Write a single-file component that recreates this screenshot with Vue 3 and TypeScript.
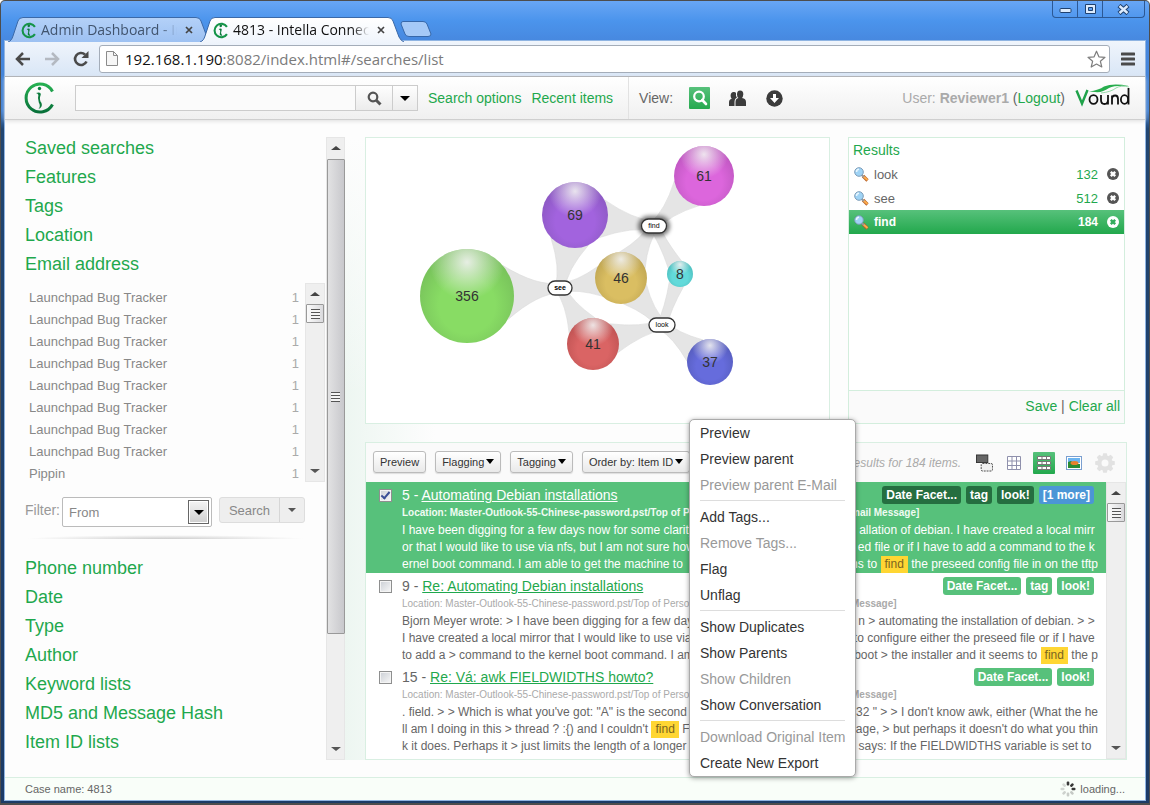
<script setup lang="ts">
import { onMounted, ref } from 'vue'

interface Cluster { id: string; x: number; y: number; r: number; edge: string; core: string; terms: string[] }
interface Term { id: string; x: number; y: number; w: number; active?: boolean }
interface Segment { text: string; hit?: boolean }
interface Tag { label: string; kind?: string }
interface Item {
  id: number
  title: string
  selected: boolean
  tags: Tag[]
  place: [string, string]
  lines: [Segment[], Segment[]][]
}

const facetsTop = ['Saved searches', 'Features', 'Tags', 'Location', 'Email address']
const facetsBottom = ['Phone number', 'Date', 'Type', 'Author', 'Keyword lists', 'MD5 and Message Hash', 'Item ID lists']
const senders = [...Array(9).fill('Launchpad Bug Tracker'), 'Pippin'] as string[]

const results = [
  { term: 'look', count: 132, active: false },
  { term: 'see', count: 512, active: false },
  { term: 'find', count: 184, active: true },
]

const terms: Term[] = [
  { id: 'see', x: 194, y: 150, w: 24 },
  { id: 'find', x: 288, y: 88, w: 25, active: true },
  { id: 'look', x: 296, y: 187, w: 26 },
]

const clusters: Cluster[] = [
  { id: '356', x: 101, y: 158, r: 47, edge: '#76bf5a', core: '#88dc64', terms: ['see'] },
  { id: '69', x: 209, y: 77, r: 33, edge: '#8a58c0', core: '#a263de', terms: ['see', 'find'] },
  { id: '61', x: 338, y: 38, r: 30, edge: '#bd56bf', core: '#dc66dc', terms: ['find'] },
  { id: '46', x: 255, y: 140, r: 26, edge: '#bda350', core: '#dabe62', terms: ['see', 'find', 'look'] },
  { id: '8', x: 314, y: 136, r: 13, edge: '#4dbdbd', core: '#62dada', terms: ['find', 'look'] },
  { id: '41', x: 227, y: 206, r: 26, edge: '#be5252', core: '#da6464', terms: ['see', 'look'] },
  { id: '37', x: 344, y: 224, r: 23, edge: '#555cbc', core: '#666cdc', terms: ['look'] },
]

function connector(c: Cluster, t: Term): string {
  const dx = t.x - c.x
  const dy = t.y - c.y
  const dist = Math.hypot(dx, dy)
  const ux = dx / dist
  const uy = dy / dist
  const at = (along: number, side: number) =>
    `${(c.x + ux * along - uy * side).toFixed(1)} ${(c.y + uy * along + ux * side).toFixed(1)}`
  const spread = 0.62
  const base = c.r * Math.cos(spread)
  const wide = c.r * Math.sin(spread)
  const neck = base + (dist - base) * 0.6
  return `M${at(base, wide)} Q${at(neck, 3)} ${at(dist, 5)} L${at(dist, -5)} Q${at(neck, -3)} ${at(base, -wide)} Z`
}

const links = clusters.flatMap(c => c.terms.map(id => connector(c, terms.find(t => t.id === id)!)))

const items: Item[] = [
  {
    id: 5, title: 'Automating Debian installations', selected: true,
    tags: [{ label: 'Date Facet...' }, { label: 'tag' }, { label: 'look!' }, { label: '[1 more]', kind: 'more' }],
    place: ['Location: Master-Outlook-55-Chinese-password.pst/Top of Personal', 'mail Message]'],
    lines: [
      [[{ text: 'I have been digging for a few days now for some clarity' }], [{ text: 'allation of debian. I have created a local mirr ' }]],
      [[{ text: 'or that I would like to use via nfs, but I am not sure how' }], [{ text: 'ed file or if I have to add a command to the k ' }]],
      [[{ text: 'ernel boot command. I am able to get the machine to' }], [{ text: 'ms to ' }, { text: 'find', hit: true }, { text: ' the preseed config file in on the tftp' }]],
    ],
  },
  {
    id: 9, title: 'Re: Automating Debian installations', selected: false,
    tags: [{ label: 'Date Facet...' }, { label: 'tag' }, { label: 'look!' }],
    place: ['Location: Master-Outlook-55-Chinese-password.pst/Top of Personal', 'Message]'],
    lines: [
      [[{ text: 'Bjorn Meyer wrote: > I have been digging for a few days' }], [{ text: 'n > automating the installation of debian. > > ' }]],
      [[{ text: 'I have created a local mirror that I would like to use via' }], [{ text: 'to configure either the preseed file or if I have ' }]],
      [[{ text: 'to add a > command to the kernel boot command. I am' }], [{ text: 'boot > the installer and it seems to ' }, { text: 'find', hit: true }, { text: ' the p' }]],
    ],
  },
  {
    id: 15, title: 'Re: Vá: awk FIELDWIDTHS howto?', selected: false,
    tags: [{ label: 'Date Facet...' }, { label: 'look!' }],
    place: ['Location: Master-Outlook-55-Chinese-password.pst/Top of Personal', 'Message]'],
    lines: [
      [[{ text: '. field. > > Which is what you\'ve got: "A" is the second' }], [{ text: ' 32 " > > I don\'t know awk, either (What the he' }]],
      [[{ text: 'll am I doing in this > thread ? :{) and I couldn\'t ' }, { text: 'find', hit: true }, { text: ' FIELD' }], [{ text: 'age, > but perhaps it doesn\'t do what you thin' }]],
      [[{ text: 'k it does. Perhaps it > just limits the length of a longer' }], [{ text: 'says: If the FIELDWIDTHS variable is set to  ' }]],
    ],
  },
]

const menu: { label: string; off?: boolean }[][] = [
  [{ label: 'Preview' }, { label: 'Preview parent' }, { label: 'Preview parent E-Mail', off: true }],
  [{ label: 'Add Tags...' }, { label: 'Remove Tags...', off: true }, { label: 'Flag' }, { label: 'Unflag' }],
  [{ label: 'Show Duplicates' }, { label: 'Show Parents' }, { label: 'Show Children', off: true }, { label: 'Show Conversation' }],
  [{ label: 'Download Original Item', off: true }, { label: 'Create New Export' }],
]

const tabs = [
  { title: 'Admin Dashboard - Intella', active: false },
  { title: '4813 - Intella Connect', active: true },
]

const query = ref('')
const sender = ref('From')
const senderList = ref<HTMLElement | null>(null)
onMounted(() => {
  if (senderList.value) senderList.value.scrollTop = 18
})
</script>

<template>
  <div class="window">
    <header class="titlebar">
      <div class="tabs">
        <div v-for="(tab, i) in tabs" :key="tab.title" class="tab" :class="{ active: tab.active }">
          <svg class="tab-shape" viewBox="0 0 204 25" aria-hidden="true">
            <defs>
              <linearGradient :id="'tabfill' + i" x1="0" y1="0" x2="0" y2="1">
                <stop offset="0" :stop-color="tab.active ? '#ffffff' : '#b4d1f8'" />
                <stop offset="1" :stop-color="tab.active ? '#f0f5fc' : '#9dc1f2'" />
              </linearGradient>
            </defs>
            <path d="M0 25 C3 24 4 22 5 19 L10 4 Q11 .5 15 .5 H188 Q192 .5 193 4 L199 20 Q201 24 204 25" :fill="`url(#tabfill${i})`" stroke="#3b69a8" />
          </svg>
          <svg class="favicon" viewBox="0 0 31 32" aria-hidden="true">
            <path d="M27 9A13 13 0 1 0 27 23" fill="none" stroke="#149448" stroke-width="4" />
            <circle cx="15" cy="7" r="2.5" fill="#0c7a3c" />
            <path d="M11 13 Q17 11 17 14 Q14 20 18 26 Q11 27 14 19 Q15 15 11 13" fill="#0c7a3c" />
          </svg>
          <span class="tab-title">{{ tab.title }}</span>
          <button class="tab-close" aria-label="Close tab">
            <svg viewBox="0 0 8 8"><path d="M1 1L7 7M7 1L1 7" stroke="#444" stroke-width="1.7" /></svg>
          </button>
        </div>
        <button class="new-tab" aria-label="New tab">
          <svg viewBox="0 0 32 16"><path d="M3 .5H23Q26 .5 27 3L31 13Q31 15.500 28 15.500H9Q6 15.500 5 13L1 3Q1 .5 3 .5Z" fill="#a5c9f7" stroke="#3768aa" /></svg>
        </button>
      </div>
      <div class="win-buttons">
        <button aria-label="Minimize"><svg viewBox="0 0 13 9"><rect x="1" y="3.500" width="11" height="4" rx="1" fill="#dcebfd" stroke="#1f416f" /></svg></button>
        <button aria-label="Maximize"><svg viewBox="0 0 13 11"><path d="M1.500 .5h10v9h-10zM4.500 3.500h4v3h-4z" fill="#dcebfd" fill-rule="evenodd" stroke="#1f416f" /></svg></button>
        <button class="wide" aria-label="Close"><svg viewBox="0 0 13 11"><path d="M2 1.500L11 9.500M11 1.500L2 9.500" stroke="#1f416f" stroke-width="4.500" /><path d="M2.500 2L10.500 9M10.500 2L2.500 9" stroke="#dcebfd" stroke-width="2.400" /></svg></button>
      </div>
    </header>

    <div class="page">
      <nav class="toolbar">
        <button aria-label="Back"><svg viewBox="0 0 16 16"><path d="M15 8H3M8 2L2 8L8 14" fill="none" stroke="#4a4a4a" stroke-width="2.500" /></svg></button>
        <button aria-label="Forward"><svg viewBox="0 0 16 16"><path d="M1 8H13M8 2L14 8L8 14" fill="none" stroke="#b4b9c1" stroke-width="2.500" /></svg></button>
        <button aria-label="Reload"><svg viewBox="0 0 16 16"><path d="M13.500 10.500A6 6 0 1 1 12 3.500" fill="none" stroke="#4a4a4a" stroke-width="2.600" /><path d="M15.500 0V7H8.500Z" fill="#4a4a4a" /></svg></button>
        <div class="address">
          <svg class="page-icon" viewBox="0 0 12 15"><path d="M.5 .5H7.500L11.500 4.500V14.500H.5Z" fill="#f6f6f6" stroke="#8b8b8b" /><path d="M7.500 .5V4.500H11.500" fill="none" stroke="#8b8b8b" /></svg>
          <div class="url" role="textbox" aria-label="Address"><b>192.168.1.190</b>:8082/index.html#/searches/list</div>
          <button class="star" aria-label="Bookmark"><svg viewBox="0 0 19 18"><path d="M9.500 1.200L11.900 6.800L18 7.300L13.400 11.300L14.800 17L9.500 14L4.200 17L5.600 11.300L1 7.300L7.100 6.800Z" fill="#fff" stroke="#7d7d7d" stroke-width="1.200" stroke-linejoin="round" /></svg></button>
        </div>
        <button aria-label="Menu"><svg viewBox="0 0 14 14"><path d="M1 2H13M1 7H13M1 12H13" stroke="#4a4a4a" stroke-width="3" stroke-linecap="round" /></svg></button>
      </nav>

      <div class="app-bar">
        <svg class="logo" viewBox="0 0 31 32" aria-label="Intella Connect">
          <defs><linearGradient id="ring" x1="0" y1="0" x2="0" y2="1"><stop offset="0" stop-color="#27b052" /><stop offset="1" stop-color="#08713a" /></linearGradient></defs>
          <path d="M28.500 9.500A14 14 0 1 0 28.500 22.500" fill="none" stroke="url(#ring)" stroke-width="3" />
          <circle cx="15.500" cy="6.500" r="1.700" fill="#0c8040" />
          <path d="M12 11Q17 9.500 16.800 12.500Q14.600 18 17.500 21Q19 25 14.500 27Q17 24 14.800 20.500Q13.300 16 14.400 13Q14 11.500 12 11Z" fill="#0c7a3c" />
        </svg>
        <form class="search" @submit.prevent>
          <input v-model="query" type="text" aria-label="Search query" />
          <button class="go" aria-label="Search"><svg viewBox="0 0 15 15"><circle cx="6" cy="6" r="4.300" fill="none" stroke="#555" stroke-width="2.200" /><path d="M9 9L13.500 13.500" stroke="#555" stroke-width="3" /></svg></button>
          <button class="more" aria-label="More search choices"><i class="caret"></i></button>
        </form>
        <a href="#options" class="link options">Search options</a>
        <a href="#recent" class="link">Recent items</a>
        <div class="views">
          <span>View:</span>
          <button class="view on" aria-label="Search view"><svg viewBox="0 0 16 16"><circle cx="7" cy="6.500" r="4.800" fill="none" stroke="#fff" stroke-width="2.200" /><path d="M10.200 10L14 14" stroke="#fff" stroke-width="2.600" stroke-linecap="round" /></svg></button>
          <button class="view people" aria-label="People"><svg viewBox="0 0 17 17"><path d="M11 .5Q14.500 .5 14.300 4.500Q14 7 13 8Q17 8.500 17 12V16H6.500V12Q6.500 8.500 9.500 8Q8 7 8 4.500Q8 .5 11 .5Z" fill="#3c3c3c" /><path d="M4.500 2Q6.500 1.800 7 3Q6.500 6 8 7.500Q5.500 8.500 5.500 12V16H0V12.500Q0 9.500 2.700 8.800Q1.500 7.500 1.600 5.500Q1.800 2.200 4.500 2Z" fill="#3c3c3c" /></svg></button>
          <button class="view" aria-label="Downloads"><svg viewBox="0 0 17 17"><circle cx="8.500" cy="8.500" r="8.200" fill="#3c3c3c" /><path d="M7 4h3v4h3L8.500 13L4 8h3Z" fill="#fff" /></svg></button>
        </div>
        <div class="user">User: <b>Reviewer1</b> <span class="dark">(<a href="#logout">Logout</a>)</span></div>
        <svg class="vound" viewBox="0 0 55 24" role="img" aria-label="Vound">
          <path d="M1.500 6.500L7 19.500L12.500 6" fill="none" stroke="#1fa24a" stroke-width="2.400" />
          <path d="M14 7.500Q24 6 29 2.500Q38 -1 54 2Q40 1 34 4Q27 9 20 8Q17 7.500 14 7.500Z" fill="#28ad4e" />
          <path d="M26 9Q36 8 41 4Q46 1 54 3" fill="none" stroke="#7fcf95" stroke-width=".8" />
          <g fill="none" stroke="#111" stroke-width="1.800">
            <ellipse cx="18.500" cy="15.500" rx="4" ry="4.300" />
            <path d="M26 11V16Q26 20 29.500 20Q33 20 33 16V11V20.500M37 20.500V11.500M37 15Q37 11.500 40.200 11.500Q43 11.500 43 15V20.500" />
            <ellipse cx="49.500" cy="15.500" rx="3.600" ry="4.300" /><path d="M53.500 4V20.500" />
          </g>
        </svg>
      </div>

      <div class="content">
        <aside class="facets">
          <div class="facet-body">
            <h2 v-for="f in facetsTop" :key="f"><a :href="'#' + f">{{ f }}</a></h2>
            <div class="sender-box">
              <ul ref="senderList" class="senders">
                <li v-for="(s, i) in senders" :key="i"><span>{{ s }}</span><em>1</em></li>
              </ul>
              <div class="scrollbar inner">
                <i class="arrow up"></i><div class="thumb small"><i class="grip"></i></div><i class="arrow down"></i>
              </div>
            </div>
            <div class="filter">
              <label for="sender-filter">Filter:</label>
              <div class="select">
                <select id="sender-filter" v-model="sender"><option>From</option></select>
                <span class="drop"><i class="caret"></i></span>
              </div>
              <div class="split"><button>Search</button><button class="split-more" aria-label="More"><i class="caret"></i></button></div>
            </div>
            <div class="divider"></div>
            <h2 v-for="f in facetsBottom" :key="f"><a :href="'#' + f">{{ f }}</a></h2>
          </div>
          <div class="scrollbar outer">
            <i class="arrow up"></i><div class="thumb long"><i class="grip"></i></div><i class="arrow down"></i>
          </div>
        </aside>

        <main>
          <div class="top-row">
            <section class="graph">
              <svg viewBox="0 0 463 285" preserveAspectRatio="xMinYMin meet">
                <defs>
                  <radialGradient v-for="c in clusters" :id="'ball' + c.id" :key="c.id" cx=".5" cy=".6" r=".6">
                    <stop offset="0" :stop-color="c.core" /><stop offset=".5" :stop-color="c.core" /><stop offset="1" :stop-color="c.edge" />
                  </radialGradient>
                  <radialGradient id="shine" cx=".5" cy=".14" r=".4">
                    <stop offset="0" stop-color="#f2f2f2" stop-opacity=".9" /><stop offset=".45" stop-color="#eee" stop-opacity=".5" /><stop offset="1" stop-color="#eee" stop-opacity="0" />
                  </radialGradient>
                  <filter id="glow" x="-50%" y="-50%" width="200%" height="200%"><feGaussianBlur stdDeviation="2" /></filter>
                </defs>
                <path v-for="(d, i) in links" :key="i" :d="d" class="connector" />
                <g v-for="c in clusters" :key="c.id">
                  <circle :cx="c.x" :cy="c.y" :r="c.r" :fill="`url(#ball${c.id})`" />
                  <circle :cx="c.x" :cy="c.y" :r="c.r" fill="url(#shine)" />
                  <text :x="c.x" :y="c.y + 5" class="ball-label">{{ c.id }}</text>
                </g>
                <g v-for="t in terms" :key="t.id">
                  <rect v-if="t.active" :x="t.x - 16" :y="t.y - 10" width="32" height="20" rx="10" fill="#000" opacity=".55" filter="url(#glow)" />
                  <rect :x="t.x - t.w / 2" :y="t.y - 7" :width="t.w" height="14" rx="7" class="pill" />
                  <text :x="t.x" :y="t.y + 2" class="pill-label" :class="{ strong: t.id === 'see' }">{{ t.id }}</text>
                </g>
              </svg>
            </section>

            <section class="results">
              <h3>Results</h3>
              <ul>
                <li v-for="r in results" :key="r.term" :class="{ active: r.active }">
                  <svg class="glass" viewBox="0 0 15 15"><path d="M9 9L13.500 13.500" stroke="#b5622c" stroke-width="3.200" /><path d="M9.500 9.500L13.500 13" stroke="#ffad4b" stroke-width="1.800" /><path d="M7.500 8L10 10" stroke="#999" stroke-width="2" /><circle cx="5" cy="5" r="4.300" fill="#9fd3f5" stroke="#7d9cb8" /><path d="M2.500 5Q2.500 2.500 5 2.300" fill="none" stroke="#e8f6ff" stroke-width="1.500" /></svg>
                  <span class="term">{{ r.term }}</span>
                  <span class="count">{{ r.count }}</span>
                  <button :aria-label="'Remove ' + r.term"><svg viewBox="0 0 12 12"><circle cx="6" cy="6" r="6" fill="currentColor" /><path d="M3.800 3.800L8.200 8.200M8.200 3.800L3.800 8.200" :stroke="r.active ? '#32ad5c' : '#fff'" stroke-width="2.400" /></svg></button>
                </li>
              </ul>
              <footer><a href="#save">Save</a> | <a href="#clear">Clear all</a></footer>
            </section>
          </div>

          <section class="list">
            <div class="list-bar">
              <button class="btn">Preview</button>
              <button class="btn">Flagging <i class="caret"></i></button>
              <button class="btn">Tagging <i class="caret"></i></button>
              <button class="btn">Order by: Item ID <i class="caret"></i></button>
              <span class="summary">Results for 184 items.</span>
              <button class="mode stack" aria-label="Arrange"><svg viewBox="0 0 18 18"><rect x=".5" y=".5" width="12" height="8" fill="#666" stroke="#333" /><rect x="5.500" y="9.500" width="12" height="8" rx="1.500" fill="#f0f0f0" stroke="#444" stroke-dasharray="2 1" /></svg></button>
              <button class="mode table-mode" aria-label="Table"><svg viewBox="0 0 14 14"><path d="M.5 .5H13.500V13.500H.5ZM5 .5V13.500M9.500 .5V13.500M.5 5H13.500M.5 9.500H13.500" fill="#fff" stroke="#8f90ac" /></svg></button>
              <button class="mode on" aria-label="List"><svg viewBox="0 0 14 14"><path d="M.5 .5H13.500V3.500H.5ZM.5 5.500H13.500V8.500H.5ZM.5 10.500H13.500V13.500H.5ZM5 .5V3.500M9.500 .5V3.500M5 5.500V8.500M9.500 5.500V8.500M5 10.500V13.500M9.500 10.500V13.500" fill="#fff" stroke="#777" /></svg></button>
              <button class="mode thumbs" aria-label="Thumbnails"><svg viewBox="0 0 16 14"><rect x=".5" y=".5" width="15" height="13" fill="#fff" stroke="#7a9fd0" /><rect x="2" y="2" width="12" height="5" fill="#6bb4f0" /><path d="M2 6L5 5L9 8H14V12H2Z" fill="#298a35" /><ellipse cx="8.500" cy="7" rx="4" ry="2" fill="#e8802d" /></svg></button>
              <button class="mode gear" aria-label="Settings"><svg viewBox="-10 -10 20 20"><circle r="5.500" fill="none" stroke="#e2e2e2" stroke-width="4" /><path v-for="a in 8" :key="a" :transform="`rotate(${a * 45})`" d="M-2.600 -6.500L-1.800 -9.800H1.800L2.600 -6.500Z" fill="#e2e2e2" /></svg></button>
            </div>
            <div class="list-main">
              <div class="items">
                <article v-for="it in items" :key="it.id" class="item" :class="{ selected: it.selected }">
                  <input type="checkbox" :checked="it.selected" :aria-label="'Select item ' + it.id" />
                  <div class="item-body">
                    <div class="item-head">
                      <span>{{ it.id }} - <a :href="'#item-' + it.id">{{ it.title }}</a></span>
                      <div class="tags"><span v-for="t in it.tags" :key="t.label" class="tag" :class="t.kind">{{ t.label }}</span></div>
                    </div>
                    <div class="line place"><span>{{ it.place[0] }}</span><b>{{ it.place[1] }}</b></div>
                    <div v-for="(ln, i) in it.lines" :key="i" class="line">
                      <span v-for="(half, h) in ln" :key="h"><template v-for="(s, k) in half" :key="k"><mark v-if="s.hit">{{ s.text }}</mark><template v-else>{{ s.text }}</template></template></span>
                    </div>
                  </div>
                </article>
              </div>
              <div class="scrollbar">
                <i class="arrow up"></i><div class="thumb small"><i class="grip"></i></div><i class="arrow down"></i>
              </div>
            </div>
          </section>

          <div class="menu" role="menu">
            <div v-for="(group, g) in menu" :key="g" class="menu-group">
              <button v-for="m in group" :key="m.label" role="menuitem" :disabled="m.off">{{ m.label }}</button>
            </div>
          </div>
        </main>
      </div>

      <footer class="status">
        <span>Case name: 4813</span>
        <span class="loading">
          <svg viewBox="-8 -8 16 16"><rect v-for="n in 8" :key="n" x="-1.300" y="-7.500" width="2.600" height="4" rx="1" fill="#222" :opacity="n < 4 ? 0.9 : 0.16 + (8 - n) * 0.02" :transform="`rotate(${(n - 1) * 45})`" /></svg>
          loading...
        </span>
      </footer>
    </div>
  </div>
</template>

<style>
body { margin: 0; }
</style>

<style scoped>
.window {
  box-sizing: border-box;
  min-height: 100vh;
  display: flex;
  flex-direction: column;
  padding: 0 4px 3px;
  border: 1px solid #4d4d4d;
  border-bottom-width: 2px;
  border-radius: 5px 5px 0 0;
  background: linear-gradient(#68a6f5 0, #4b94ec 20px, #4788df 40px, #4181d4 110px, #214672 128px, #1c3b66 100%);
  font-family: "Liberation Sans", Arial, sans-serif;
  font-size: 14px;
  color: #666;
}
button { font-family: inherit; padding: 0; border: 0; background: none; display: flex; align-items: center; justify-content: center; }
svg { display: block; }
a { color: #1fa84d; text-decoration: none; }
ul { list-style: none; margin: 0; padding: 0; }
h2, h3 { margin: 0; font-weight: normal; }

.titlebar { display: flex; justify-content: space-between; align-items: flex-start; height: 40px; }
.tabs { display: flex; align-self: flex-end; padding-left: 3px; }
.tab { position: relative; display: flex; align-items: center; box-sizing: border-box; width: 204px; height: 24px; margin-right: -12px; padding: 2px 16px 0 13px; font-family: "Open Sans", "Noto Sans", sans-serif; font-size: 14px; color: #41546e; }
.tab.active { z-index: 1; color: #111; }
.tab-shape { position: absolute; left: 0; top: 0; width: 204px; height: 25px; }
.favicon { position: relative; width: 16px; height: 17px; flex: none; }
.tab-title { position: relative; flex: 1; min-width: 0; margin: 0 7px 0 4px; overflow: hidden; white-space: nowrap; line-height: 22px; -webkit-mask-image: linear-gradient(to right, #000 88%, transparent); mask-image: linear-gradient(to right, #000 88%, transparent); }
.tab-close { position: relative; width: 9px; height: 9px; margin-right: 3px; }
.tab-close svg { width: 8px; height: 8px; }
.new-tab { width: 32px; height: 16px; margin: 4px 0 0 8px; }
.new-tab svg { width: 32px; height: 16px; }
.win-buttons { display: flex; border: 1px solid #2c5894; border-top: 0; border-radius: 0 0 4px 4px; overflow: hidden; }
.win-buttons button { width: 25px; height: 16px; border-right: 1px solid #2c5894; }
.win-buttons .wide { width: 41px; border-right: 0; }
.win-buttons svg { width: 13px; height: 11px; }

.page { flex: 1; display: flex; flex-direction: column; background: #fdfdfd; box-shadow: 0 0 0 1px #8fb4e2; }
.toolbar { display: flex; align-items: center; gap: 13px; box-sizing: border-box; height: 36px; padding: 0 10px; background: linear-gradient(#f0f5fc, #d9e6f6); border-bottom: 1px solid #a5a8ac; border-radius: 3px 3px 0 0; }
.toolbar > button svg { width: 16px; height: 16px; }
.toolbar > button:last-child svg { width: 14px; height: 14px; }
.address { flex: 1; display: flex; align-items: center; height: 26px; margin: 0 -2px 0 -3px; padding: 0 3px 0 6px; border: 1px solid #a4adb9; border-radius: 3px; background: #fff; }
.page-icon { width: 12px; height: 15px; }
.url { flex: 1; margin-left: 7px; font-family: "Open Sans", "Noto Sans", sans-serif; font-size: 15px; line-height: 24px; color: #7b7b7b; white-space: nowrap; }
.url b { font-weight: normal; color: #111; }
.star svg { width: 19px; height: 18px; }

.app-bar { display: flex; align-items: center; box-sizing: border-box; height: 43px; padding: 0 14px 0 19px; background: linear-gradient(#fff, #f0f0f0); border-bottom: 1px solid #cfcfcf; box-shadow: 0 1px 4px #ddd; position: relative; white-space: nowrap; }
.logo { width: 31px; height: 32px; flex: none; }
.search { display: flex; margin: 0 10px 0 20px; }
.search input { box-sizing: border-box; width: 280px; height: 26px; border: 1px solid #ccc; border-right: 0; background: #fbfbfb; outline: 0; }
.search button { box-sizing: border-box; height: 26px; border: 1px solid #ccc; background: linear-gradient(#fefefe, #ececec); }
.go { width: 38px; }
.go svg { width: 15px; height: 15px; }
.search .more { width: 25px; border-left: 0; }
.caret { display: inline-block; border: 4px solid transparent; border-top: 4px solid #000; border-bottom: 0; }
.search .caret { border-width: 5px 5px 0; }
.options { margin-right: 10px; }
.views { display: flex; align-items: center; align-self: stretch; margin-left: 15px; padding-left: 10px; border-left: 1px solid #e2e2e2; }
.view { margin-left: 20px; }
.view svg { width: 17px; height: 17px; }
.view.on { width: 21px; height: 22px; margin-left: 16px; border-radius: 1px; background: linear-gradient(#57c17b, #26a94f); }
.view.on svg { width: 16px; height: 16px; }
.view.people { margin-left: 19px; }
.user { margin-left: auto; color: #aaa; }
.user .dark { color: #666; }
.vound { width: 55px; height: 24px; margin: 0 1px 4px 10px; }

.content { flex: 1; display: flex; padding: 17px 18px 17px 20px; }
.facets { display: flex; flex: none; width: 320px; }
.facet-body { width: 301px; padding-top: 1px; }
h2 { font-size: 18px; line-height: 21px; margin-bottom: 8px; }
h2:last-child { margin-bottom: 0; }
.sender-box { display: flex; height: 199px; margin-right: 1px; }
.senders { flex: 1; overflow: hidden; font-size: 13px; color: #888; }
.senders li { display: flex; justify-content: space-between; padding: 0 6px 0 4px; line-height: 22px; }
.senders em { font-style: normal; color: #aaa; }
.filter { display: flex; align-items: flex-start; margin-top: 15px; color: #999; }
.filter label { line-height: 26px; width: 37px; }
.select { position: relative; width: 150px; height: 30px; }
.select select { appearance: none; box-sizing: border-box; width: 100%; height: 100%; padding: 0 6px; border: 1px solid #bbb; border-radius: 2px; background: #fff; color: #888; font: inherit; font-size: 13px; }
.drop { position: absolute; right: 3px; top: 3px; box-sizing: border-box; width: 21px; height: 24px; display: flex; align-items: center; justify-content: center; border: 1px solid #666; background: linear-gradient(#f4f4f4, #cfcfcf); box-shadow: inset 0 0 0 1px #fff; pointer-events: none; }
.drop .caret { border-width: 5px 5px 0; }
.split { display: flex; box-sizing: border-box; width: 86px; height: 26px; margin-left: 7px; border: 1px solid #ddd; border-radius: 3px; background: #eee; }
.split button { flex: 1; font-size: 13px; color: #888; }
.split .split-more { flex: none; width: 25px; border-left: 1px solid #d6d6d6; }
.split .caret { border-top-color: #555; }
.divider { height: 4px; margin: 8px 20px 19px 0; background: radial-gradient(ellipse at 50% 100%, #ccc, transparent 70%); }

.scrollbar { display: flex; flex-direction: column; align-items: center; box-sizing: border-box; width: 20px; flex: none; border: 1px solid #e6e6e6; background: #efefef; padding-bottom: 8px; }
.outer { width: 19px; }
.arrow { border: 5px solid transparent; border-top-width: 0; border-bottom: 4px solid #444; margin: 8px 0; }
.arrow.down { border-top: 4px solid #555; border-bottom: 0; margin: auto 0 0; }
.thumb { display: flex; align-items: center; justify-content: center; box-sizing: border-box; width: 18px; border: 1px solid #999; border-radius: 1px; background: linear-gradient(to right, #fafafa, #dadadd); }
.thumb.small { height: 19px; }
.thumb.long { height: 475px; margin-top: 1px; background: linear-gradient(to right, #e2e2e3, #c8c8cc); }
.grip { width: 9px; height: 10px; background: repeating-linear-gradient(#555 0 1px, #f4f4f4 1px 3px); }

main { position: relative; flex: 1; min-width: 0; display: flex; flex-direction: column; padding-left: 20px; background: linear-gradient(#fdfdfd, transparent 260px), linear-gradient(to right, #edf6f1, #fdfdfd 90px); }
.top-row { display: flex; gap: 18px; margin-right: 2px; height: 287px; }
.graph { flex: 1; min-width: 0; border: 1px solid #d9efe2; background: #fff; }
.graph svg { width: 100%; height: 285px; }
.connector { fill: #e5e5e5; stroke: #dadada; stroke-width: .6; }
.ball-label { font-size: 14px; text-anchor: middle; fill: #333; }
.pill { fill: #fff; stroke: #333; stroke-width: 1.300; }
.pill-label { font-size: 7px; text-anchor: middle; fill: #000; }
.pill-label.strong { font-weight: bold; }
.results { display: flex; flex-direction: column; box-sizing: border-box; width: 277px; border: 1px solid #d3eedd; background: #fff; }
h3 { padding-left: 4px; font-size: 14px; line-height: 24px; color: #1fa84d; }
.results li { display: flex; align-items: center; height: 24px; padding: 0 5px; font-size: 13px; }
.glass { width: 15px; height: 15px; }
.term { flex: 1; margin-left: 5px; }
.count { color: #1fa84d; margin-right: 9px; }
.results li button { width: 12px; height: 12px; color: #555; }
.results li button svg { width: 12px; height: 12px; }
.results li.active, .results li.active .count, .results li.active button { color: #fff; }
.results li.active { background: linear-gradient(#57c17b, #22a84c); font-weight: bold; font-size: 12px; }
.results footer { margin-top: auto; height: 32px; line-height: 30px; padding-right: 4px; border-top: 1px solid #d3eedd; background: #fafafa; text-align: right; }

.list { flex: 1; display: flex; flex-direction: column; margin-top: 18px; border: 1px solid #d9efe2; background: #fff; }
.list-bar { display: flex; align-items: center; height: 39px; padding: 0 11px 0 7px; background: #fafafa; }
.btn { box-sizing: border-box; height: 22px; margin: 0 9px 2px 0; padding: 0 6px; border: 1px solid #bbb; border-radius: 3px; background: linear-gradient(#fff, #e9e9e9); box-shadow: 0 1px 1px #ddd; color: #333; font-size: 11px; white-space: nowrap; }
.btn .caret { margin-left: 2px; border-width: 5px 4px 0; }
.summary { margin: 0 15px 0 auto; font-size: 12px; font-style: italic; color: #aaa; white-space: nowrap; }
.mode svg { width: 100%; height: 100%; }
.mode { box-sizing: border-box; }
.stack { width: 17px; height: 18px; margin-right: 14px; }
.table-mode { width: 14px; height: 14px; margin-right: 12px; }
.mode.on { width: 22px; height: 22px; margin-right: 11px; padding: 4px; background: linear-gradient(#57c17b, #22a84c); border-radius: 1px; }
.thumbs { width: 16px; height: 14px; margin-right: 12px; }
.gear { width: 20px; height: 20px; margin-left: 1px; }
.list-main { flex: 1; display: flex; }
.items { flex: 1; min-width: 0; }
.item { display: flex; padding: 4px 8px 0 13px; height: 87px; }
.item input { appearance: none; box-sizing: border-box; width: 13px; height: 13px; margin: 3px 10px 0 0; border: 1px solid #8e8f8f; box-shadow: inset 0 0 0 1px #f4f4f4; background: linear-gradient(135deg, #cbcfd5, #f8f8f8); display: flex; justify-content: center; }
.item input:checked::after { content: ""; width: 3px; height: 7px; border: solid #3a4f96; border-width: 0 2px 2px 0; transform: rotate(40deg); }
.item-body { flex: 1; min-width: 0; font-size: 12px; color: #666; }
.item-head { display: flex; justify-content: space-between; height: 18px; line-height: 18px; font-size: 14px; white-space: nowrap; }
.item-head a { text-decoration: underline; }
.tags { display: flex; gap: 5px; margin-right: 4px; }
.tag { height: 18px; padding: 0 4px; border-radius: 3px; background: #57c17b; color: #fff; font-size: 12px; font-weight: bold; }
.line { display: grid; grid-template-columns: 1fr 247px; line-height: 17px; height: 17px; white-space: pre; }
.line > * { overflow: hidden; min-width: 0; }
.line > :last-child { display: flex; justify-content: flex-end; }
.line.place { height: 18px; line-height: 18px; font-size: 10px; color: #aaa; }
.line.place > :last-child { justify-content: flex-start; }
mark { display: inline-block; padding: 0 4px; background: #ffd633; color: #7a6420; }
.selected { background: #57c17b; }
.selected .item-body, .selected .item-head a { color: #fff; }
.selected .place { color: #f0fbf3; font-weight: bold; }
.selected .tag { background: #256e40; }
.selected .tag.more { background: #4b96d6; }

.menu { position: absolute; left: 344px; top: 282px; box-sizing: border-box; width: 167px; padding: 0 10px; border: 1px solid #aaa; border-radius: 5px; background: #fff; box-shadow: 0 1px 5px rgba(0, 0, 0, .4); }
.menu-group + .menu-group { margin-top: 2px; padding-top: 3px; border-top: 1px solid #ddd; }
.menu button { width: 100%; height: 26px; justify-content: flex-start; font-size: 14px; color: #333; white-space: nowrap; }
.menu button:disabled { color: #999; }

.status { display: flex; align-items: center; justify-content: space-between; box-sizing: border-box; height: 23px; padding: 0 20px; border-top: 1px solid #d9efe2; background: #f9fef9; font-size: 11px; }
.loading { display: flex; align-items: center; gap: 4px; }
.loading svg { width: 16px; height: 16px; }
</style>
